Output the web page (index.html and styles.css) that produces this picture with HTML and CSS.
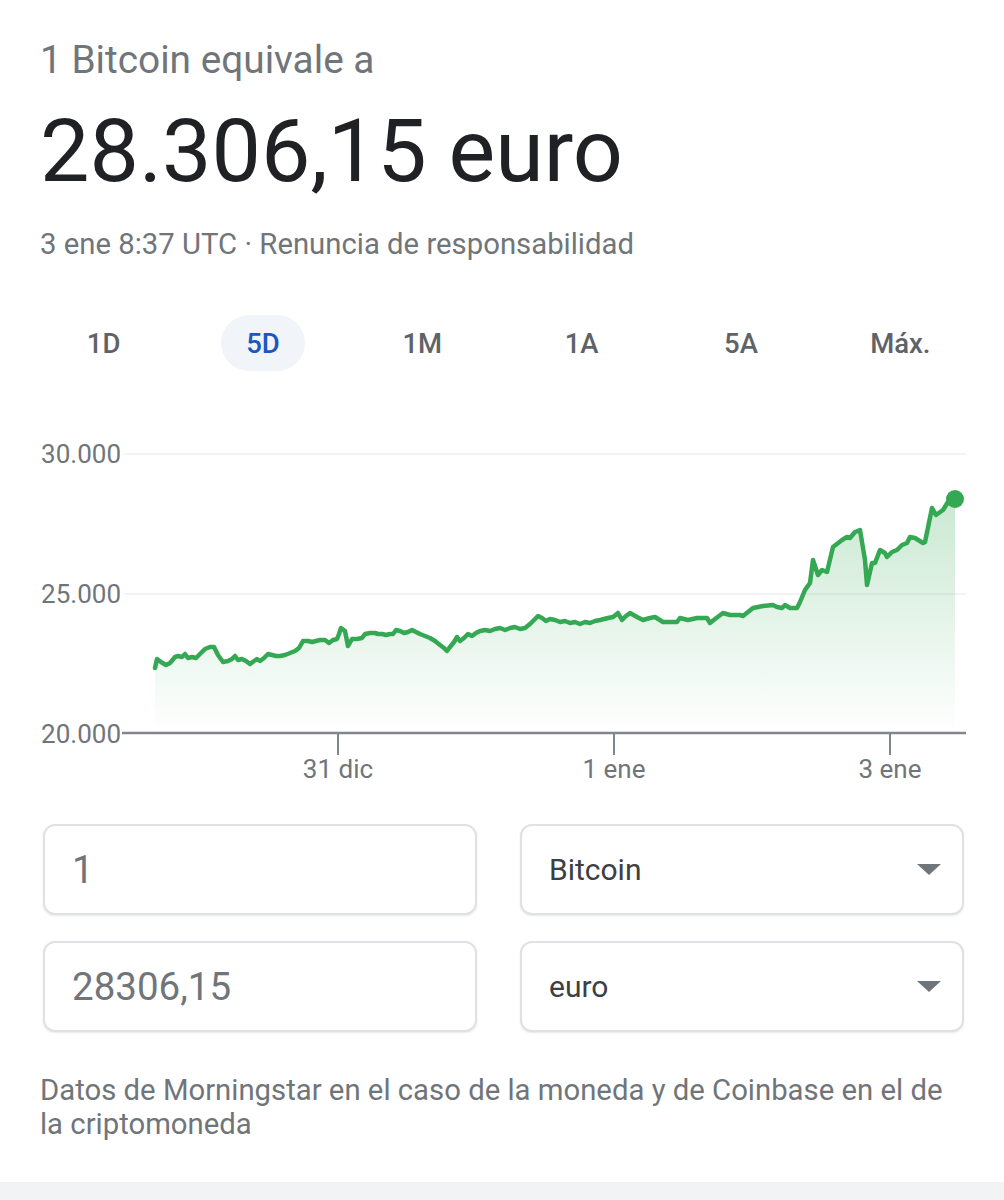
FILE: index.html
```html
<!DOCTYPE html>
<html lang="es">
<head>
<meta charset="utf-8">
<title>Bitcoin a euro</title>
<link rel="stylesheet" href="styles.css">
</head>
<body>
<div class="page">
  <div class="title">1 Bitcoin equivale a</div>
  <div class="value">28.306,15 euro</div>
  <div class="meta">3 ene 8:37 UTC · Renuncia de responsabilidad</div>

  <div class="tabs">
    <div class="tab"><span>1D</span></div>
    <div class="tab"><span class="active">5D</span></div>
    <div class="tab"><span>1M</span></div>
    <div class="tab"><span>1A</span></div>
    <div class="tab"><span>5A</span></div>
    <div class="tab"><span>Máx.</span></div>
  </div>

  <svg class="chart" width="1004" height="400" viewBox="0 400 1004 400" xmlns="http://www.w3.org/2000/svg">
    <defs>
      <linearGradient id="fillGrad" gradientUnits="userSpaceOnUse" x1="0" y1="499" x2="0" y2="734">
        <stop offset="0" stop-color="#34a853" stop-opacity="0.26"/>
        <stop offset="1" stop-color="#34a853" stop-opacity="0"/>
      </linearGradient>
    </defs>
    <line class="grid" x1="124" y1="454" x2="966" y2="454"/>
    <line class="grid" x1="124" y1="594" x2="966" y2="594"/>
    <text class="ylab" x="121" y="463">30.000</text>
    <text class="ylab" x="121" y="603">25.000</text>
    <text class="ylab" x="121" y="743">20.000</text>

    <path class="area" d="M155,668 L157,659 L161,662 L166,665 L170,663 L175,657 L178,656 L182,657 L185,654 L188,658 L192,657 L196,658 L200,654 L205,649 L210,647 L214,647 L218,655 L223,662 L228,661 L232,659 L235,656 L238,660 L242,659 L246,661 L250,664 L254,661 L257,659 L260,661 L264,658 L268,654 L272,655 L276,656 L280,656 L285,655 L290,653 L295,651 L299,648 L303,641 L308,641 L312,642 L316,641 L320,640 L325,640 L329,643 L333,640 L337,639 L339,634 L341,628 L345,631 L348,646 L352,639 L357,639 L362,638 L365,634 L370,633 L375,633 L378,634 L382,634 L386,635 L390,634 L393,634 L396,630 L400,631 L404,633 L408,632 L412,630 L416,632 L420,634 L425,636 L430,638 L435,641 L440,645 L444,648 L447,651 L450,647 L454,642 L457,637 L460,641 L464,638 L468,634 L472,636 L476,633 L480,631 L485,630 L490,631 L495,629 L500,628 L505,630 L510,628 L515,627 L520,629 L525,628 L530,624 L534,620 L538,616 L542,618 L546,621 L550,619 L555,620 L560,622 L565,621 L570,623 L575,622 L580,624 L585,622 L590,623 L595,621 L600,620 L608,618 L613,617 L618,613 L622,620 L626,616 L630,613 L637,617 L643,620 L650,618 L655,617 L663,622 L670,622 L677,622 L680,618 L688,620 L697,618 L707,618 L710,623 L715,619 L723,613 L730,615 L740,615 L743,616 L748,612 L753,608 L763,606 L773,605 L777,607 L782,608 L785,605 L790,608 L797,608 L800,602 L805,590 L810,583 L813,560 L818,575 L822,570 L827,572 L833,547 L842,540 L847,537 L850,538 L855,532 L860,530 L865,560 L867,585 L872,563 L875,563 L880,550 L885,553 L887,557 L892,552 L897,550 L902,545 L907,543 L910,537 L915,538 L923,543 L925,542 L932,508 L936,515 L943,510 L948,502 L955,499 L955,734 L155,734 Z"/>
    <path class="line" d="M155,668 L157,659 L161,662 L166,665 L170,663 L175,657 L178,656 L182,657 L185,654 L188,658 L192,657 L196,658 L200,654 L205,649 L210,647 L214,647 L218,655 L223,662 L228,661 L232,659 L235,656 L238,660 L242,659 L246,661 L250,664 L254,661 L257,659 L260,661 L264,658 L268,654 L272,655 L276,656 L280,656 L285,655 L290,653 L295,651 L299,648 L303,641 L308,641 L312,642 L316,641 L320,640 L325,640 L329,643 L333,640 L337,639 L339,634 L341,628 L345,631 L348,646 L352,639 L357,639 L362,638 L365,634 L370,633 L375,633 L378,634 L382,634 L386,635 L390,634 L393,634 L396,630 L400,631 L404,633 L408,632 L412,630 L416,632 L420,634 L425,636 L430,638 L435,641 L440,645 L444,648 L447,651 L450,647 L454,642 L457,637 L460,641 L464,638 L468,634 L472,636 L476,633 L480,631 L485,630 L490,631 L495,629 L500,628 L505,630 L510,628 L515,627 L520,629 L525,628 L530,624 L534,620 L538,616 L542,618 L546,621 L550,619 L555,620 L560,622 L565,621 L570,623 L575,622 L580,624 L585,622 L590,623 L595,621 L600,620 L608,618 L613,617 L618,613 L622,620 L626,616 L630,613 L637,617 L643,620 L650,618 L655,617 L663,622 L670,622 L677,622 L680,618 L688,620 L697,618 L707,618 L710,623 L715,619 L723,613 L730,615 L740,615 L743,616 L748,612 L753,608 L763,606 L773,605 L777,607 L782,608 L785,605 L790,608 L797,608 L800,602 L805,590 L810,583 L813,560 L818,575 L822,570 L827,572 L833,547 L842,540 L847,537 L850,538 L855,532 L860,530 L865,560 L867,585 L872,563 L875,563 L880,550 L885,553 L887,557 L892,552 L897,550 L902,545 L907,543 L910,537 L915,538 L923,543 L925,542 L932,508 L936,515 L943,510 L948,502 L955,499"/>
    <circle class="dot" cx="955" cy="499" r="9"/>

    <line class="axis" x1="122" y1="733" x2="966" y2="733"/>
    <line class="tick" x1="338" y1="733" x2="338" y2="755"/>
    <line class="tick" x1="614" y1="733" x2="614" y2="755"/>
    <line class="tick" x1="890" y1="733" x2="890" y2="755"/>
    <text class="xlab" x="338" y="778">31 dic</text>
    <text class="xlab" x="614" y="778">1 ene</text>
    <text class="xlab" x="890" y="778">3 ene</text>
  </svg>

  <div class="converter">
    <div class="box amount">1</div>
    <div class="box select"><span class="sel-text">Bitcoin</span><span class="caret"></span></div>
    <div class="box amount">28306,15</div>
    <div class="box select"><span class="sel-text">euro</span><span class="caret"></span></div>
  </div>

  <p class="source">Datos de Morningstar en el caso de la moneda y de Coinbase en el de la criptomoneda</p>
</div>
<div class="bottom-bar"></div>
</body>
</html>
```

FILE: styles.css
```css
html, body {
  margin: 0;
  padding: 0;
  background: #ffffff;
}

body {
  font-family: Roboto, "Liberation Sans", Arial, sans-serif;
  color: #202124;
}

.page {
  padding-top: 38px;
}

.title {
  margin: 0 40px;
  font-size: 38.8px;
  line-height: 44px;
  color: #70757a;
}

.value {
  margin: 17px 40px 0;
  font-size: 88px;
  line-height: 104px;
  color: #202124;
}

.meta {
  margin: 24px 40px 0;
  font-size: 29.3px;
  line-height: 34px;
  color: #70757a;
}

.tabs {
  margin-top: 54px;
  padding: 0 24px;
  display: grid;
  grid-template-columns: repeat(6, 1fr);
  height: 56px;
}

.tab {
  display: flex;
  justify-content: center;
  align-items: center;
}

.tab span {
  display: block;
  padding: 2px 25px 0;
  line-height: 54px;
  border-radius: 28px;
  font-size: 27.5px;
  font-weight: 500;
  color: #5f6368;
}

.tab span.active {
  background: #f1f4f9;
  color: #1b56c2;
}

.chart {
  display: block;
  margin-top: 29px;
}

.grid {
  stroke: #f1f3f4;
  stroke-width: 2;
}

.axis {
  stroke: #80868b;
  stroke-width: 2.5;
}

.tick {
  stroke: #80868b;
  stroke-width: 2;
}

.ylab {
  font-family: Roboto, "Liberation Sans", Arial, sans-serif;
  font-size: 26px;
  fill: #70757a;
  text-anchor: end;
}

.xlab {
  font-family: Roboto, "Liberation Sans", Arial, sans-serif;
  font-size: 26px;
  fill: #70757a;
  text-anchor: middle;
}

.area {
  fill: url(#fillGrad);
  stroke: none;
}

.line {
  fill: none;
  stroke: #34a853;
  stroke-width: 4.5;
  stroke-linejoin: round;
  stroke-linecap: round;
}

.dot {
  fill: #34a853;
}

.converter {
  margin: 24px 40px 0 43px;
  display: grid;
  grid-template-columns: 434px 1fr;
  column-gap: 43px;
  row-gap: 26px;
}

.box {
  box-sizing: border-box;
  height: 91px;
  border: 2px solid #dfe1e5;
  border-radius: 12px;
  box-shadow: 0 1px 2px rgba(60, 64, 67, 0.12);
  display: flex;
  align-items: center;
  padding: 0 21px 0 27px;
  background: #fff;
}

.amount {
  font-size: 38.5px;
  color: #70757a;
}

.select {
  justify-content: space-between;
  font-size: 30px;
  color: #3c4043;
}

.caret {
  width: 0;
  height: 0;
  border-left: 12px solid transparent;
  border-right: 12px solid transparent;
  border-top: 11px solid #70757a;
}

.source {
  margin: 41px 50px 0 40px;
  font-size: 29.3px;
  line-height: 34px;
  color: #70757a;
}

.bottom-bar {
  margin-top: 41px;
  height: 60px;
  background: #f1f3f4;
}
```
